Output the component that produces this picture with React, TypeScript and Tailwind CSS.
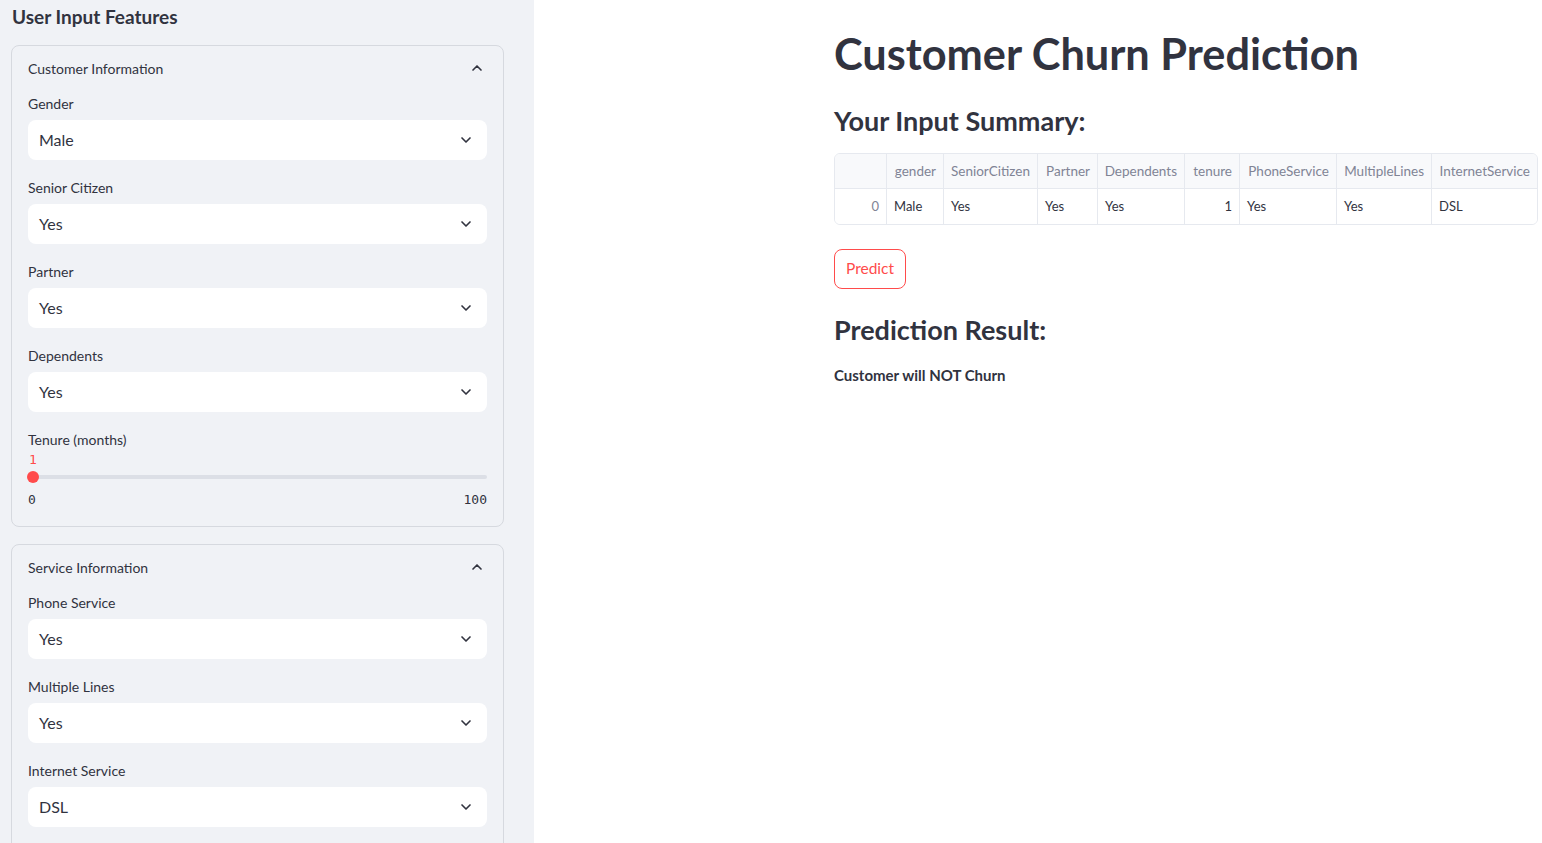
import { ChevronDown, ChevronUp } from "lucide-react";

const font = { fontFamily: "Lato, 'Noto Sans', sans-serif" };

interface Campo {
  label: string;
  value: string;
}

const clienteCampos: Campo[] = [
  { label: "Gender", value: "Male" },
  { label: "Senior Citizen", value: "Yes" },
  { label: "Partner", value: "Yes" },
  { label: "Dependents", value: "Yes" },
];

const servicoCampos: Campo[] = [
  { label: "Phone Service", value: "Yes" },
  { label: "Multiple Lines", value: "Yes" },
  { label: "Internet Service", value: "DSL" },
];

const colunas = [
  { nome: "", w: "w-[52px]" },
  { nome: "gender", w: "w-[57px]" },
  { nome: "SeniorCitizen", w: "w-[94px]" },
  { nome: "Partner", w: "w-[60px]" },
  { nome: "Dependents", w: "w-[87px]" },
  { nome: "tenure", w: "w-[55px]" },
  { nome: "PhoneService", w: "w-[97px]" },
  { nome: "MultipleLines", w: "w-[95px]" },
  { nome: "InternetService", w: "w-[107px]" },
];

const linha = ["0", "Male", "Yes", "Yes", "Yes", "1", "Yes", "Yes", "DSL"];

function SelectBox({ label, value }: Campo) {
  return (
    <div className="flex flex-col">
      <div className="h-[24px] flex items-center text-[14px] text-[#31333f] -mt-[1px] mb-[1px]">{label}</div>
      <div className="mt-[4px] h-[40px] bg-white rounded-lg flex items-center justify-between pl-[11px] pr-[13px]">
        <span className="text-[16px] text-[#31333f]">{value}</span>
        <ChevronDown size={16} strokeWidth={2.5} className="text-[#31333f]" />
      </div>
    </div>
  );
}

function Expander({ title, children }: { title: string; children: React.ReactNode }) {
  return (
    <div className="border border-[#d6d9df] rounded-lg">
      <div className="h-[46px] px-[16px] flex items-center justify-between">
        <span className="text-[14px] text-[#31333f] -mt-[2px]">{title}</span>
        <ChevronUp size={16} strokeWidth={2.5} className="text-[#31333f] mr-[2px] -mt-[2px]" />
      </div>
      <div className="px-[16px] flex flex-col gap-[16px]">{children}</div>
    </div>
  );
}

export default function App() {
  return (
    <div className="flex w-[1542px] h-[843px] overflow-hidden bg-white" style={font}>
      {/* Sidebar */}
      <div className="w-[534px] shrink-0 bg-[#f0f2f6] px-[11px] pt-[3px]">
        <h2 className="text-[19px] leading-[28px] font-bold text-[#31333f] pl-[1px]">User Input Features</h2>

        <div className="mt-[14px] w-[493px] flex flex-col gap-[17px]">
          <Expander title="Customer Information">
            {clienteCampos.map((c, i) => (
              <SelectBox key={i} label={c.label} value={c.value} />
            ))}
            <div className="flex flex-col pb-[17px]">
              <div className="h-[24px] flex items-center text-[14px] text-[#31333f] -mt-[1px] mb-[1px]">Tenure (months)</div>
              <div className="h-[16px] flex items-center text-[13px] text-[#ff4b4b] pl-[1px]" style={{ fontFamily: "'DejaVu Sans Mono', monospace" }}>
                1
              </div>
              <div className="h-[18px] flex items-center relative">
                <div className="w-full h-[4px] rounded bg-[#dcdfe6]" />
                <div className="absolute left-[-1px] w-[12px] h-[12px] rounded-full bg-[#ff4b4b]" />
              </div>
              <div
                className="mt-[5px] h-[18px] flex items-center justify-between text-[13px] text-[#31333f]"
                style={{ fontFamily: "'DejaVu Sans Mono', monospace" }}
              >
                <span>0</span>
                <span>100</span>
              </div>
            </div>
          </Expander>

          <Expander title="Service Information">
            {servicoCampos.map((c, i) => (
              <SelectBox key={i} label={c.label} value={c.value} />
            ))}
            <div className="h-[40px]" />
          </Expander>
        </div>
      </div>

      {/* Conteúdo principal */}
      <div className="flex-1 pl-[300px] pt-[27px]">
        <div className="w-[704px] text-[#31333f]">
          <h1 className="text-[43.3px] leading-[53px] font-bold">Customer Churn Prediction</h1>
          <h2 className="mt-[23px] text-[27px] leading-[36px] font-bold">Your Input Summary:</h2>

          <div className="mt-[14px] border border-[#e6e9ef] rounded-md overflow-hidden">
            <div className="flex h-[35px] bg-[#f8f9fb] border-b border-[#e6e9ef]">
              {colunas.map((c, i) => (
                <div
                  key={i}
                  className={`${c.w} ${i < colunas.length - 1 ? "border-r border-[#e6e9ef]" : "flex-1"} flex items-center justify-end px-[7px] text-[13.5px] text-[#808495]`}
                >
                  {c.nome}
                </div>
              ))}
            </div>
            <div className="flex h-[35px] bg-white">
              {linha.map((v, i) => (
                <div
                  key={i}
                  className={`${colunas[i].w} ${i < linha.length - 1 ? "border-r border-[#e6e9ef]" : "flex-1"} flex items-center px-[7px] text-[13px] ${
                    i === 0 ? "justify-end text-[#808495]" : i === 5 ? "justify-end" : "justify-start"
                  }`}
                >
                  {v}
                </div>
              ))}
            </div>
          </div>

          <button className="mt-[24px] h-[40px] px-[11px] border border-[#ff4b4b] rounded-lg text-[15.5px] text-[#ff4b4b] bg-white">
            Predict
          </button>

          <h2 className="mt-[23px] text-[27px] leading-[36px] font-bold">Prediction Result:</h2>
          <p className="mt-[15px] text-[15px] leading-[24px] font-bold">Customer will NOT Churn</p>
        </div>
      </div>
    </div>
  );
}
